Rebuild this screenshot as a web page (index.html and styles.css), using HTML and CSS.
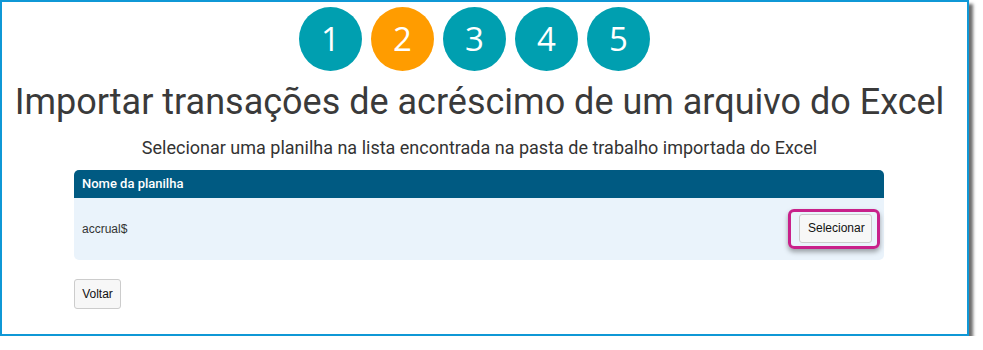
FILE: index.html
```html
<!DOCTYPE html>
<html lang="pt">
<head>
<meta charset="utf-8">
<title>Importar transações</title>
<link rel="stylesheet" href="styles.css">
</head>
<body>
<div class="frame">
  <div class="steps">
    <span class="step">1</span>
    <span class="step active">2</span>
    <span class="step">3</span>
    <span class="step">4</span>
    <span class="step">5</span>
  </div>
  <h1 class="title">Importar transações de acréscimo de um arquivo do Excel</h1>
  <p class="subtitle">Selecionar uma planilha na lista encontrada na pasta de trabalho importada do Excel</p>
  <div class="sheet-table">
    <div class="sheet-head">Nome da planilha</div>
    <div class="sheet-row">
      <span class="sheet-name">accrual$</span>
      <span class="highlight"><button class="btn" type="button">Selecionar</button></span>
    </div>
  </div>
  <div class="actions">
    <button class="btn btn-back" type="button">Voltar</button>
  </div>
</div>
</body>
</html>
```

FILE: styles.css
```css
html, body {
  margin: 0;
  padding: 0;
  background: #ffffff;
}

.frame {
  box-sizing: border-box;
  width: 969px;
  height: 336px;
  border: 2px solid #0f98d6;
  background: #ffffff;
  box-shadow: 4px 4px 3px rgba(60, 60, 60, 0.75);
  padding-top: 5px;
}

.steps {
  display: flex;
  justify-content: center;
  gap: 9px;
  padding-right: 20px;
}

.step {
  width: 63px;
  height: 64px;
  border-radius: 50%;
  background: #009fb0;
  color: #ffffff;
  font-family: "Open Sans", "DejaVu Sans", sans-serif;
  font-size: 33px;
  line-height: 64px;
  text-align: center;
}

.step.active {
  background: #ff9c00;
}

.title {
  margin: 10px 0 0 0;
  padding-right: 10px;
  font-family: Roboto, "Liberation Sans", sans-serif;
  font-weight: 400;
  font-size: 36px;
  line-height: 1.2;
  color: #3a3a3a;
  text-align: center;
  white-space: nowrap;
}

.subtitle {
  margin: 13px 0 0 0;
  padding-right: 10px;
  font-family: Roboto, "Liberation Sans", sans-serif;
  font-size: 18px;
  line-height: 1.2;
  color: #333333;
  text-align: center;
}

.sheet-table {
  margin: 11px 83px 0 72px;
}

.sheet-head {
  height: 28px;
  line-height: 28px;
  padding-left: 8px;
  background: #005a82;
  color: #ffffff;
  font-family: Roboto, "Liberation Sans", sans-serif;
  font-weight: 500;
  font-size: 13px;
  border-radius: 5px 5px 0 0;
}

.sheet-row {
  height: 62px;
  display: flex;
  align-items: center;
  justify-content: space-between;
  padding: 0 4px 0 8px;
  background: #eaf3fb;
  border-radius: 0 0 5px 5px;
}

.sheet-name {
  font-family: "Liberation Sans", Arial, sans-serif;
  font-size: 12px;
  color: #333333;
}

.highlight {
  display: inline-flex;
  padding: 2px 5px 3px 8px;
  border: 3px solid #c8208a;
  border-radius: 6px;
  box-shadow: 0 3px 5px rgba(0, 0, 0, 0.35);
}

.btn {
  box-sizing: border-box;
  height: 29px;
  padding: 0 8px;
  font-family: "Liberation Sans", Arial, sans-serif;
  font-size: 12px;
  color: #111111;
  background: #f7f7f7;
  border: 1px solid #cccccc;
  border-radius: 3px;
}

.highlight .btn {
  width: 73px;
}

.actions {
  margin: 19px 0 0 72px;
}

.btn-back {
  width: 47px;
  height: 30px;
  padding: 0;
}
```
